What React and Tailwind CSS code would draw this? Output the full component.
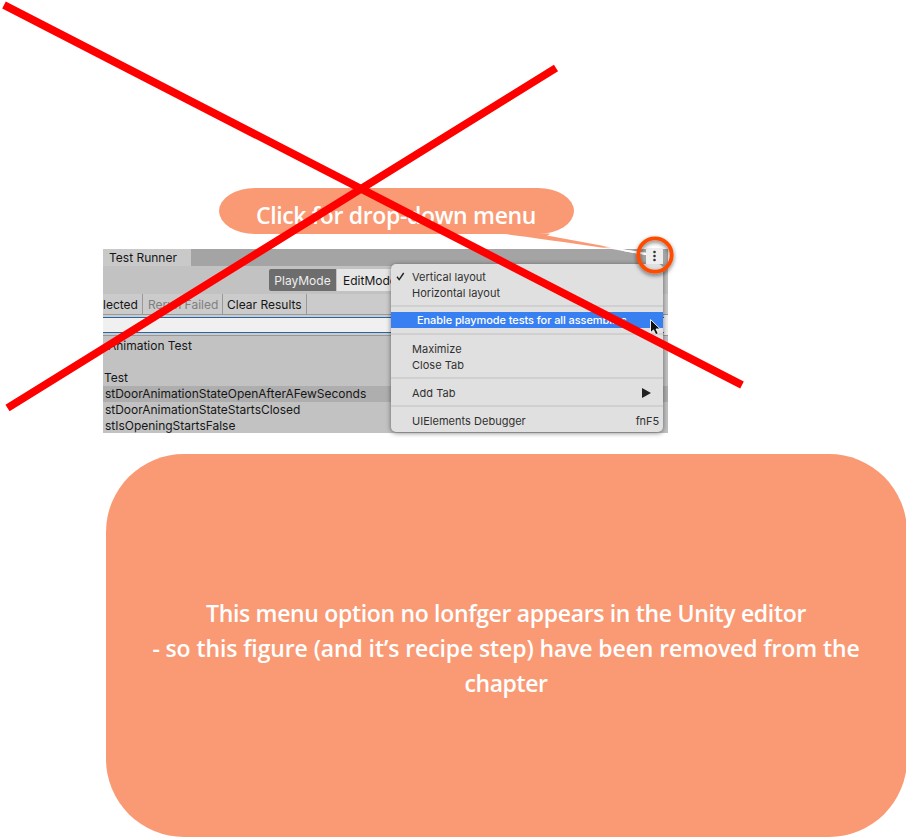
const treeRows = [
  { name: 'Animation Test', style: 'pl-[5px]' },
  { name: '', style: '' },
  { name: 'Test', style: 'pl-[1px]' },
  { name: 'stDoorAnimationStateOpenAfterAFewSeconds', style: 'pl-[2px] bg-[#aeaeae]' },
  { name: 'stDoorAnimationStateStartsClosed', style: 'pl-[2px]' },
  { name: 'stIsOpeningStartsFalse', style: 'pl-[2px]' },
];

function Separator() {
  return (
    <div className="flex h-3 items-center">
      <div className="h-[2px] w-full bg-[#d0d0d0]" />
    </div>
  );
}

function MenuItem({ children }) {
  return <div className="flex h-4 items-center pl-[21px] pr-[4px] pt-px">{children}</div>;
}

function ContextMenu() {
  return (
    <div className="absolute left-[288px] top-[15px] h-[168px] w-[272px] rounded-[5px] bg-[#e0e0e0] pt-1 text-[11px] leading-4 tracking-[0.02px] text-[#303030] shadow-[0_1px_5px_rgba(0,0,0,0.5)]">
      <div className="flex h-4 items-center pl-[5px] pt-px">
        <svg width="9" height="9" viewBox="0 0 9 9" className="mr-[7px]">
          <path d="M1 4.8 3.2 7.6 7.7 1" fill="none" stroke="#222" strokeWidth="1.4" />
        </svg>
        <span>Vertical layout</span>
      </div>
      <MenuItem>Horizontal layout</MenuItem>
      <Separator />
      <div className="flex h-4 items-center bg-[#3880f1] pl-[26px] text-[11px] font-medium tracking-[-0.08px] text-white">
        Enable playmode tests for all assemblies
      </div>
      <Separator />
      <MenuItem>Maximize</MenuItem>
      <MenuItem>Close Tab</MenuItem>
      <Separator />
      <MenuItem>
        <span className="grow">Add Tab</span>
        <svg width="9" height="10" viewBox="0 0 9 10" className="mr-[8px]">
          <path d="M0 0 9 5 0 10Z" fill="#222" />
        </svg>
      </MenuItem>
      <Separator />
      <MenuItem>
        <span className="grow">UIElements Debugger</span>
        <span className="tracking-[-0.1px]">fnF5</span>
      </MenuItem>
    </div>
  );
}

function TestRunner() {
  return (
    <section className="relative ml-[103px] h-[184px] w-[565px] bg-[#c2c2c2] font-[Inter,sans-serif] text-[12px] text-[#161616]">
      <div className="flex h-[17px] bg-[#a4a4a4]">
        <div className="flex w-[88px] items-center bg-[#c9c9c9] pl-[6px]">Test Runner</div>
      </div>
      <div className="flex h-[28px] pl-[166px] pt-[3px]">
        <div className="flex h-[22px] w-[67px] items-center justify-center rounded-l-[2px] bg-[#6d6d6d] pt-px text-[#eeeeee]">PlayMode</div>
        <div className="ml-px flex h-[22px] w-[68px] items-center bg-[#e6e6e6] pl-[6px] pt-px">EditMode</div>
      </div>
      <div className="flex h-[21px] border-b border-[#999999] bg-[#cbcbcb]">
        <div className="flex w-[40px] items-center border-r border-[#999999] pt-px">lected</div>
        <div className="flex w-[80px] items-center border-r border-[#999999] pl-[5px] pt-px text-[#808080]">Rerun Failed</div>
        <div className="flex w-[84px] items-center border-r border-[#999999] pl-[4px] pt-px">Clear Results</div>
      </div>
      <div className="h-[21px] border-b border-[#999999] bg-[#cbcbcb] pt-[2px]">
        <div className="h-[16px] border-y border-[#2466a8] bg-[#f0f0f0]" />
      </div>
      <div className="pt-[2px]">
        {treeRows.map((row, i) => (
          <div key={i} className={`flex h-4 items-center tracking-[-0.02px] last:h-[15px] ${row.style}`}>
            {row.name}
          </div>
        ))}
      </div>
      <div className="absolute right-0 top-[66px] h-[20px] w-[4px] bg-[#eeeeee]" />
      <ContextMenu />
    </section>
  );
}

function Annotations() {
  return (
    <svg width="906" height="837" viewBox="0 0 906 837" className="pointer-events-none absolute left-0 top-0">
      <defs>
        <linearGradient id="tail" gradientUnits="userSpaceOnUse" x1="602" y1="0" x2="612" y2="0">
          <stop offset="0" stopColor="#fa9a75" />
          <stop offset="1" stopColor="#ffffff" />
        </linearGradient>
        <filter id="shade" x="-30%" y="-30%" width="160%" height="160%">
          <feDropShadow dx="0" dy="2" stdDeviation="2" floodColor="#000" floodOpacity="0.55" />
        </filter>
      </defs>
      <path d="M505 233.5 547 233.5 Q553 233 547 235.5L612 247.5 646 253V255L612 249 Q540 238.5 505 234Z" fill="url(#tail)" />
      <path d="M646 248h17v16h-17z" fill="#eeeeee" />
      <path d="M617 248.5 646 252.7V255L625 251.5Z" fill="#fff" />
      <g fill="#333">
        <circle cx="654.5" cy="252" r="1.3" />
        <circle cx="654.5" cy="256" r="1.3" />
        <circle cx="654.5" cy="260" r="1.3" />
      </g>
      <circle cx="655" cy="255" r="16.7" fill="none" stroke="#ff4b00" strokeWidth="3.8" filter="url(#shade)" />
      <path d="M650.5 319.5v13.2l3-2.8 2.3 4.8 2.5-1.2-2.3-4.5h4.3Z" fill="#111" stroke="#fff" strokeWidth="0.9" />
      <path d="M4 5 742 385M7.5 408 556 68" fill="none" stroke="#ff0000" strokeWidth="7.8" />
    </svg>
  );
}

export default function App() {
  return (
    <main className="relative h-[837px] w-[906px] overflow-hidden bg-white pt-[188px]">
      <div className="ml-[218.5px] flex h-[46px] w-[355px] items-center justify-center rounded-[36px/23px] bg-[#fa9a75] pt-[8px] font-['Open_Sans',sans-serif] text-[23px] font-semibold tracking-[-0.34px] text-white">
        Click for drop-down menu
      </div>
      <div className="h-[15px]" />
      <TestRunner />
      <div className="ml-[105.5px] mt-[20.5px] flex h-[383px] w-[801px] flex-col items-center justify-center rounded-[78px] bg-[#fa9a75] pt-[7px] font-['Open_Sans',sans-serif] text-[23px] font-semibold leading-[35px] text-white">
        <p className="tracking-[-0.33px]">This menu option no lonfger appears in the Unity editor</p>
        <p className="whitespace-nowrap tracking-[-0.11px]">- so this figure (and it’s recipe step) have been removed from the</p>
        <p className="tracking-[-0.4px]">chapter</p>
      </div>
      <Annotations />
    </main>
  );
}
